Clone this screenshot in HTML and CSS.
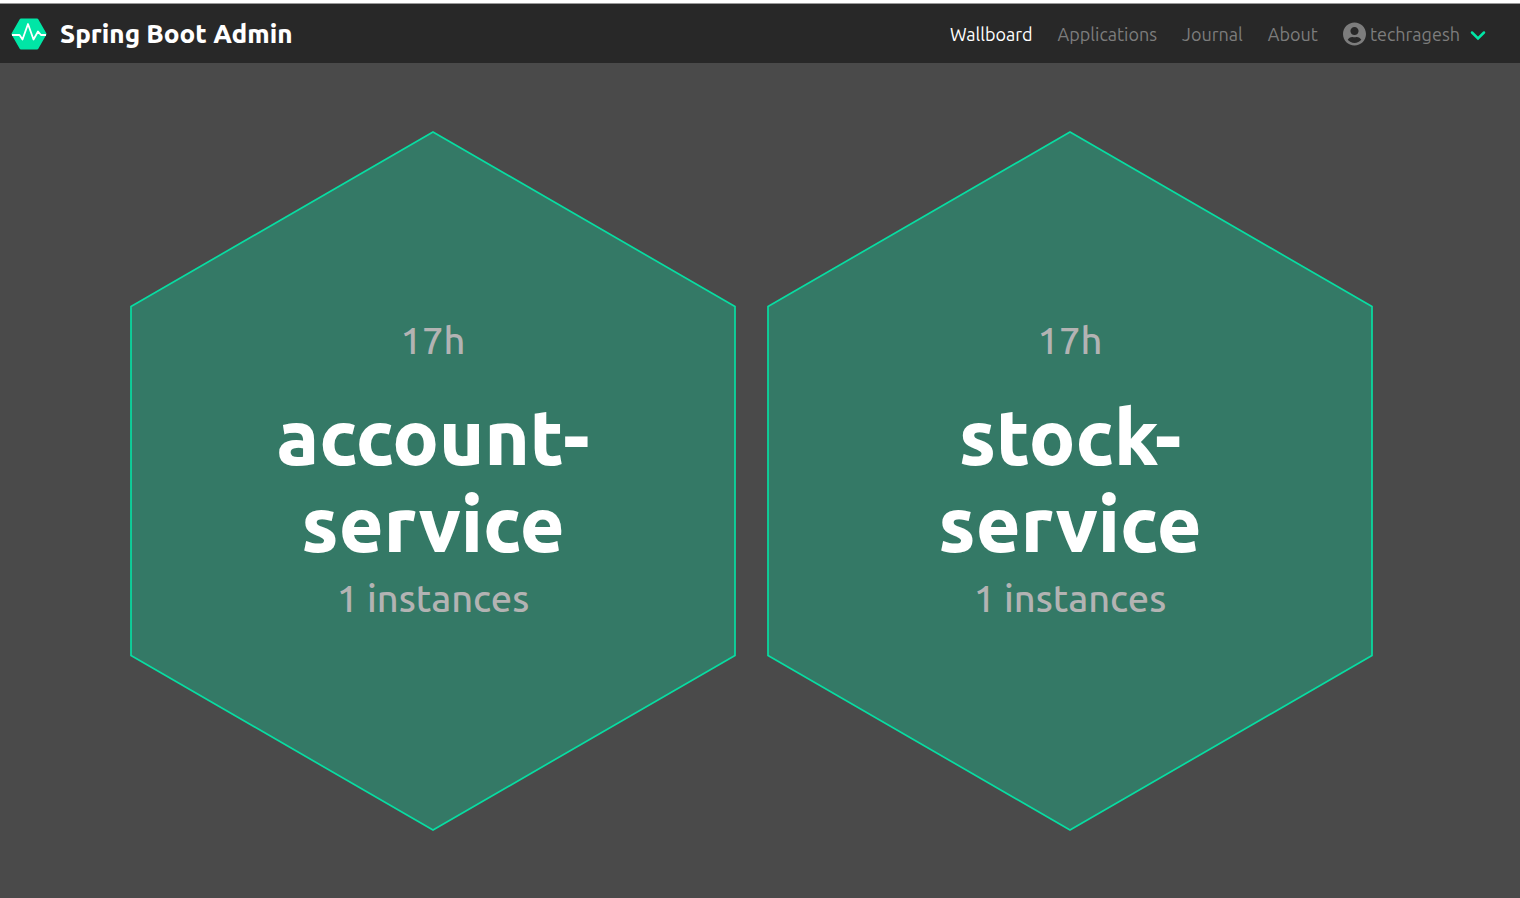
FILE: index.html
```html
<!DOCTYPE html>
<html lang="en">
<head>
<meta charset="utf-8">
<meta name="viewport" content="width=device-width, initial-scale=1">
<title>Spring Boot Admin</title>
<link rel="stylesheet" href="styles.css">
</head>
<body>
<header class="navbar">
  <a class="brand" href="#">
    <svg class="brand-logo" viewBox="0 0 36 32" aria-hidden="true">
      <path class="logo-shape" d="M10 .5h16a1.500 1.500 0 0 1 1.300.8L35.300 15.200q.5.800 0 1.600l-8 13.900A1.500 1.500 0 0 1 26 31.500H10a1.500 1.500 0 0 1-1.300-.8L.7 16.800q-.5-.8 0-1.600L8.700 1.300A1.500 1.500 0 0 1 10 .5z"/>
      <path class="logo-pulse" d="M1 17h7.500l3 4.500L17 6l5.500 15.500 4.500-8 3 3.500h5"/>
    </svg>
    <span>Spring Boot Admin</span>
  </a>
  <nav class="menu">
    <a class="menu-link active" href="#">Wallboard</a>
    <a class="menu-link" href="#">Applications</a>
    <a class="menu-link" href="#">Journal</a>
    <a class="menu-link" href="#">About</a>
    <button class="user" type="button">
      <svg class="user-icon" viewBox="0 0 496 512" aria-hidden="true"><path d="M248 8C111 8 0 119 0 256s111 248 248 248 248-111 248-248S385 8 248 8zm0 96c48.600 0 88 39.400 88 88s-39.400 88-88 88-88-39.400-88-88 39.400-88 88-88zm0 344c-58.700 0-111.300-26.600-146.500-68.200 18.800-35.400 55.600-59.800 98.500-59.800 2.400 0 4.800.4 7.100 1.100 13 4.200 26.600 6.900 40.900 6.900s28-2.700 40.900-6.900c2.300-.7 4.700-1.100 7.100-1.100 42.900 0 79.700 24.400 98.500 59.800C359.300 421.400 306.700 448 248 448z"/></svg>
      <span>techragesh</span>
      <svg class="chevron" viewBox="0 0 16 12" aria-hidden="true"><path d="M2 2.500l6 6 6-6"/></svg>
    </button>
  </nav>
</header>
<main class="wallboard">
  <a class="hex" href="#">
    <svg class="hex-shape" viewBox="0 0 608 702" aria-hidden="true"><path d="M304 2L606 176.500V525.500L304 700L2 525.500V176.500z"/></svg>
    <span class="hex-body">
      <span class="meta">17h</span>
      <strong class="name">account-<wbr>service</strong>
      <span class="meta">1 instances</span>
    </span>
  </a>
  <a class="hex" href="#">
    <svg class="hex-shape" viewBox="0 0 608 702" aria-hidden="true"><path d="M304 2L606 176.500V525.500L304 700L2 525.500V176.500z"/></svg>
    <span class="hex-body">
      <span class="meta">17h</span>
      <strong class="name">stock-<wbr>service</strong>
      <span class="meta">1 instances</span>
    </span>
  </a>
</main>
</body>
</html>
```

FILE: styles.css
```css
* {
  box-sizing: border-box;
}

body {
  margin: 0;
  min-height: 100vh;
  display: flex;
  flex-direction: column;
  border-top: 3px solid #fff;
  background: #4a4a4a;
  font-family: Ubuntu, "Noto Sans", sans-serif;
}

a {
  color: inherit;
  text-decoration: none;
}

.navbar {
  display: flex;
  align-items: center;
  justify-content: space-between;
  min-height: 60px;
  padding: 0 34px 0 11px;
  border-top: 1px solid #999;
  background: #282828;
}

.brand {
  display: flex;
  align-items: center;
  gap: 13px;
  color: #fff;
  font-size: 26px;
  font-weight: 800;
  white-space: nowrap;
}

.brand-logo {
  width: 36px;
  height: 32px;
}

.logo-shape {
  fill: #00e6a6;
}

.logo-pulse {
  fill: none;
  stroke: #fff;
  stroke-width: 1.8;
  stroke-linejoin: round;
}

.menu {
  display: flex;
  align-items: center;
  gap: 25px;
  color: #7d7d7d;
  font-size: 18px;
}

.menu-link.active {
  color: #fff;
}

.user {
  display: flex;
  align-items: center;
  gap: 4px;
  padding: 0;
  border: 0;
  background: none;
  color: inherit;
  font: inherit;
}

.user-icon {
  width: 23px;
  height: 24px;
  fill: currentColor;
}

.chevron {
  width: 16px;
  height: 12px;
  margin: 4px 0 0 6px;
  fill: none;
  stroke: #00e6a6;
  stroke-width: 2.5;
  stroke-linecap: round;
}

.wallboard {
  flex: 1;
  display: flex;
  align-items: center;
  justify-content: center;
  gap: 29px;
  padding-right: 17px;
}

.hex {
  display: grid;
  width: 40vw;
}

.hex-shape,
.hex-body {
  grid-area: 1 / 1;
}

.hex-shape {
  width: 100%;
  fill: #347966;
  stroke: #08dda2;
  stroke-width: 1.7;
}

.hex-body {
  display: flex;
  flex-direction: column;
  align-items: center;
  justify-content: center;
  padding: 0 20% 24px;
  text-align: center;
}

.meta {
  color: #b3b3b3;
  font-size: 38px;
  font-weight: 500;
  line-height: 44px;
}

.name {
  margin: 31px 0 9px;
  color: #fff;
  font-size: 77px;
  font-weight: 800;
  line-height: 87px;
}
```
